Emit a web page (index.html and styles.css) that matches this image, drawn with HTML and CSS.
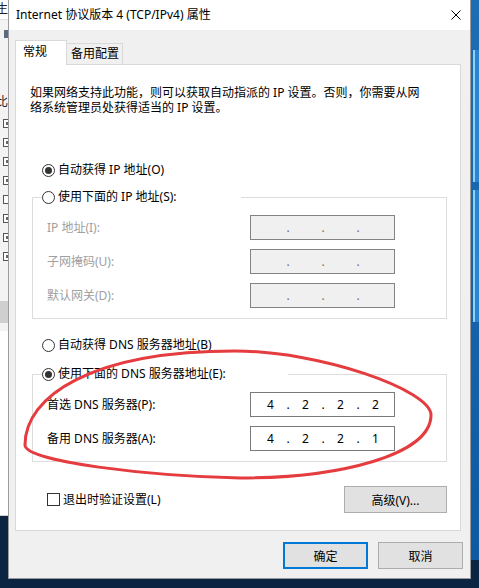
FILE: index.html
```html
<!DOCTYPE html>
<html lang="zh-CN">
<head>
    <meta charset="UTF-8">
    <meta name="viewport" content="width=device-width, initial-scale=1.0">
    <title>Internet 协议版本 4 (TCP/IPv4) 属性</title>
    <link rel="stylesheet" href="styles.css">
</head>
<body>
    <div class="screen">
        <!-- window behind, left edge -->
        <div class="side-left">
            <div class="peek-top"><span>生</span></div>
            <div class="peek-bar"></div>
            <div class="peek-char"><span>比</span></div>
            <div class="peek-list">
                <span class="peek-box on"></span>
                <span class="peek-box on"></span>
                <span class="peek-box on"></span>
                <span class="peek-box on"></span>
                <span class="peek-box"></span>
                <span class="peek-box on"></span>
                <span class="peek-box on"></span>
                <span class="peek-box on"></span>
            </div>
            <div class="peek-band"></div>
            <div class="peek-white"></div>
        </div>

        <div class="dialog">
            <div class="titlebar">
                <span class="title">Internet 协议版本 4 (TCP/IPv4) 属性</span>
                <svg class="close" width="10" height="10" viewBox="0 0 10 10">
                    <path d="M0.5 0.5L9.5 9.5M9.5 0.5L0.5 9.5" stroke="#000" stroke-width="1" fill="none"/>
                </svg>
            </div>
            <div class="dialog-body">
                <div class="tabs">
                    <div class="tab active">常规</div>
                    <div class="tab alt">备用配置</div>
                </div>
                <div class="panel">
                    <p class="intro"><span class="line">如果网络支持此功能，则可以获取自动指派的 IP 设置。否则，你需要从网</span><span class="line">络系统管理员处获得适当的 IP 设置。</span></p>

                    <div class="option first"><span class="radio checked"></span>自动获得 IP 地址(O)</div>
                    <div class="group">
                        <div class="group-title ip-title"><span class="radio"></span>使用下面的 IP 地址(S):</div>
                        <div class="fields">
                            <span class="field-label off">IP 地址(I):</span>
                            <span class="ip off"><span class="oct"></span><span class="dot">.</span><span class="oct"></span><span class="dot">.</span><span class="oct"></span><span class="dot">.</span><span class="oct"></span></span>
                            <span class="field-label off">子网掩码(U):</span>
                            <span class="ip off"><span class="oct"></span><span class="dot">.</span><span class="oct"></span><span class="dot">.</span><span class="oct"></span><span class="dot">.</span><span class="oct"></span></span>
                            <span class="field-label off">默认网关(D):</span>
                            <span class="ip off"><span class="oct"></span><span class="dot">.</span><span class="oct"></span><span class="dot">.</span><span class="oct"></span><span class="dot">.</span><span class="oct"></span></span>
                        </div>
                    </div>

                    <div class="option dns-auto"><span class="radio"></span>自动获得 DNS 服务器地址(B)</div>
                    <div class="group dns">
                        <div class="group-title dns-title"><span class="radio checked"></span>使用下面的 DNS 服务器地址(E):</div>
                        <div class="fields">
                            <span class="field-label">首选 DNS 服务器(P):</span>
                            <span class="ip"><span class="oct">4</span><span class="dot">.</span><span class="oct">2</span><span class="dot">.</span><span class="oct">2</span><span class="dot">.</span><span class="oct">2</span></span>
                            <span class="field-label">备用 DNS 服务器(A):</span>
                            <span class="ip"><span class="oct">4</span><span class="dot">.</span><span class="oct">2</span><span class="dot">.</span><span class="oct">2</span><span class="dot">.</span><span class="oct">1</span></span>
                        </div>
                    </div>

                    <div class="extra">
                        <div class="check-row"><span class="check"></span>退出时验证设置(L)</div>
                        <button class="btn adv">高级(V)...</button>
                    </div>
                </div>
                <div class="actions">
                    <button class="btn primary">确定</button>
                    <button class="btn">取消</button>
                </div>
            </div>
        </div>

        <!-- desktop, right edge -->
        <div class="side-right">
            <div class="win"></div>
            <div class="win"></div>
        </div>

        <!-- red annotation drawn over the dialog -->
        <svg class="mark" width="479" height="588" viewBox="0 0 479 588">
            <path d="M235 351 C320 351 431 390 431 415 C431 455 340 478 240 478 C150 476 25 462 25 445 C25 396 92 351 235 351 Z" fill="none" stroke="#e43c3f" stroke-width="3"/>
        </svg>
    </div>
</body>
</html>
```

FILE: styles.css
```css
* {
    box-sizing: border-box;
}

body {
    margin: 0;
    font-family: "Noto Sans", "Noto Sans CJK SC", sans-serif;
    font-size: 12px;
    color: #000;
}

.screen {
    position: relative;
    display: flex;
    align-items: flex-start;
    width: 479px;
    height: 588px;
    overflow: hidden;
    background-color: #0b2442;
}

/* left edge of the window behind */
.side-left {
    width: 8px;
    height: 516px;
    flex: none;
    display: flex;
    flex-direction: column;
    overflow: hidden;
    background-color: #f3f3f3;
}

.peek-top,
.peek-char {
    display: flex;
    justify-content: flex-end;
    white-space: nowrap;
    line-height: 18px;
    color: #222;
}

.peek-top {
    height: 20px;
    background-color: #fff;
    border-bottom: 1px solid #e2e2e2;
}

.peek-bar {
    height: 8px;
    margin: 10px 0 0 4px;
    background-color: #5a6b7e;
}

.peek-char {
    margin-top: 55px;
}

.peek-list {
    display: flex;
    flex-direction: column;
    gap: 10px;
    margin-top: 8px;
    padding-left: 3px;
}

.peek-box {
    width: 9px;
    height: 9px;
    border: 1px solid #555;
    background-color: #fff;
}

.peek-box.on {
    background-color: #666;
    box-shadow: inset 0 0 0 2px #fff;
}

.peek-band {
    height: 22px;
    margin-top: 40px;
    background-color: #cfcfcf;
}

.peek-white {
    flex: 1;
    margin-top: 8px;
    background-color: #fff;
    border-bottom: 1px solid #d0d0d0;
}

/* dialog */
.dialog {
    width: 463px;
    height: 579px;
    flex: none;
    border-left: 1px solid #9b9b9b;
    border-right: 1px solid #9b9b9b;
    border-bottom: 1px solid #9b9b9b;
}

.titlebar {
    height: 30px;
    display: flex;
    align-items: center;
    justify-content: space-between;
    padding: 0 9px 0 7px;
    background-color: #fff;
}

.title {
    line-height: 16px;
}

.close {
    display: block;
}

.dialog-body {
    height: 548px;
    padding: 10px 9px 0 6px;
    background-color: #f0f0f0;
}

.tabs {
    display: flex;
    align-items: flex-end;
    height: 24px;
}

.tab {
    border: 1px solid #d9d9d9;
    border-bottom: none;
    line-height: 16px;
}

.tab.active {
    position: relative;
    width: 52px;
    height: 25px;
    margin-bottom: -1px;
    padding: 3px 0 0 7px;
    background-color: #fff;
}

.tab.alt {
    width: 56px;
    height: 21px;
    padding: 2px 0 0 4px;
    border-left: none;
    background-color: #f0f0f0;
}

.panel {
    height: 467px;
    padding: 0 13px 0 16px;
    background-color: #fff;
    border: 1px solid #d9d9d9;
}

.intro {
    margin: 20px 0 0 -2px;
}

.intro .line {
    display: block;
    height: 15px;
    line-height: 15px;
    white-space: nowrap;
}

.option,
.group-title,
.check-row {
    display: flex;
    align-items: center;
    height: 16px;
    line-height: 16px;
    white-space: nowrap;
}

.option {
    margin-left: 10px;
}

.option.first {
    margin-top: 47px;
}

.option.dns-auto {
    margin-top: 18px;
}

.radio {
    width: 13px;
    height: 13px;
    flex: none;
    display: flex;
    align-items: center;
    justify-content: center;
    margin-right: 3px;
    border: 1px solid #333;
    border-radius: 50%;
    background-color: #fff;
}

.radio.checked::after {
    content: "";
    width: 7px;
    height: 7px;
    border-radius: 50%;
    background-color: #333;
}

.group {
    margin-top: 19px;
    padding: 0 50px 10px 14px;
    border: 1px solid #dcdcdc;
}

.group.dns {
    margin-top: 21px;
}

.group-title {
    margin: -9px 0 0 -5px;
    background-color: #fff;
}

.ip-title {
    width: 199px;
}

.dns-title {
    width: 246px;
}

.fields {
    display: grid;
    grid-template-columns: 203px 145px;
    row-gap: 9px;
    align-items: center;
    margin-top: 10px;
}

.field-label {
    line-height: 16px;
}

.field-label.off {
    color: #a0a0a0;
}

.ip {
    display: flex;
    align-items: center;
    height: 25px;
    padding-left: 5px;
    line-height: 16px;
    border: 1px solid #7a7a7a;
    background-color: #fff;
}

.ip.off {
    border-color: #838383;
    background-color: #f0f0f0;
    color: #6d6d6d;
}

.oct {
    width: 29px;
    text-align: center;
}

.dot {
    width: 6px;
    text-align: center;
}

.extra {
    display: flex;
    align-items: center;
    justify-content: space-between;
    margin-top: 24px;
    padding-left: 15px;
}

.check {
    width: 13px;
    height: 13px;
    flex: none;
    margin-right: 3px;
    border: 1px solid #333;
    background-color: #fff;
}

.btn {
    width: 85px;
    height: 27px;
    padding: 0;
    font-family: inherit;
    font-size: 12px;
    color: #000;
    background-color: #e1e1e1;
    border: 1px solid #adadad;
}

.btn.adv {
    width: 103px;
}

.btn.primary {
    border: 2px solid #0078d7;
}

.actions {
    display: flex;
    justify-content: flex-end;
    gap: 10px;
    margin: 11px -2px 0 0;
}

/* desktop on the right */
.side-right {
    width: 8px;
    height: 560px;
    flex: none;
    display: flex;
    flex-direction: column;
    gap: 8px;
    padding-top: 50px;
    background: linear-gradient(#1d6db5, #0f59a3);
}

.side-right .win {
    height: 132px;
    margin-left: 2px;
    border-left: 2px solid #8fd3f7;
    background-color: #2a84cf;
}

.mark {
    position: absolute;
    left: 0;
    top: 0;
    pointer-events: none;
}
```
